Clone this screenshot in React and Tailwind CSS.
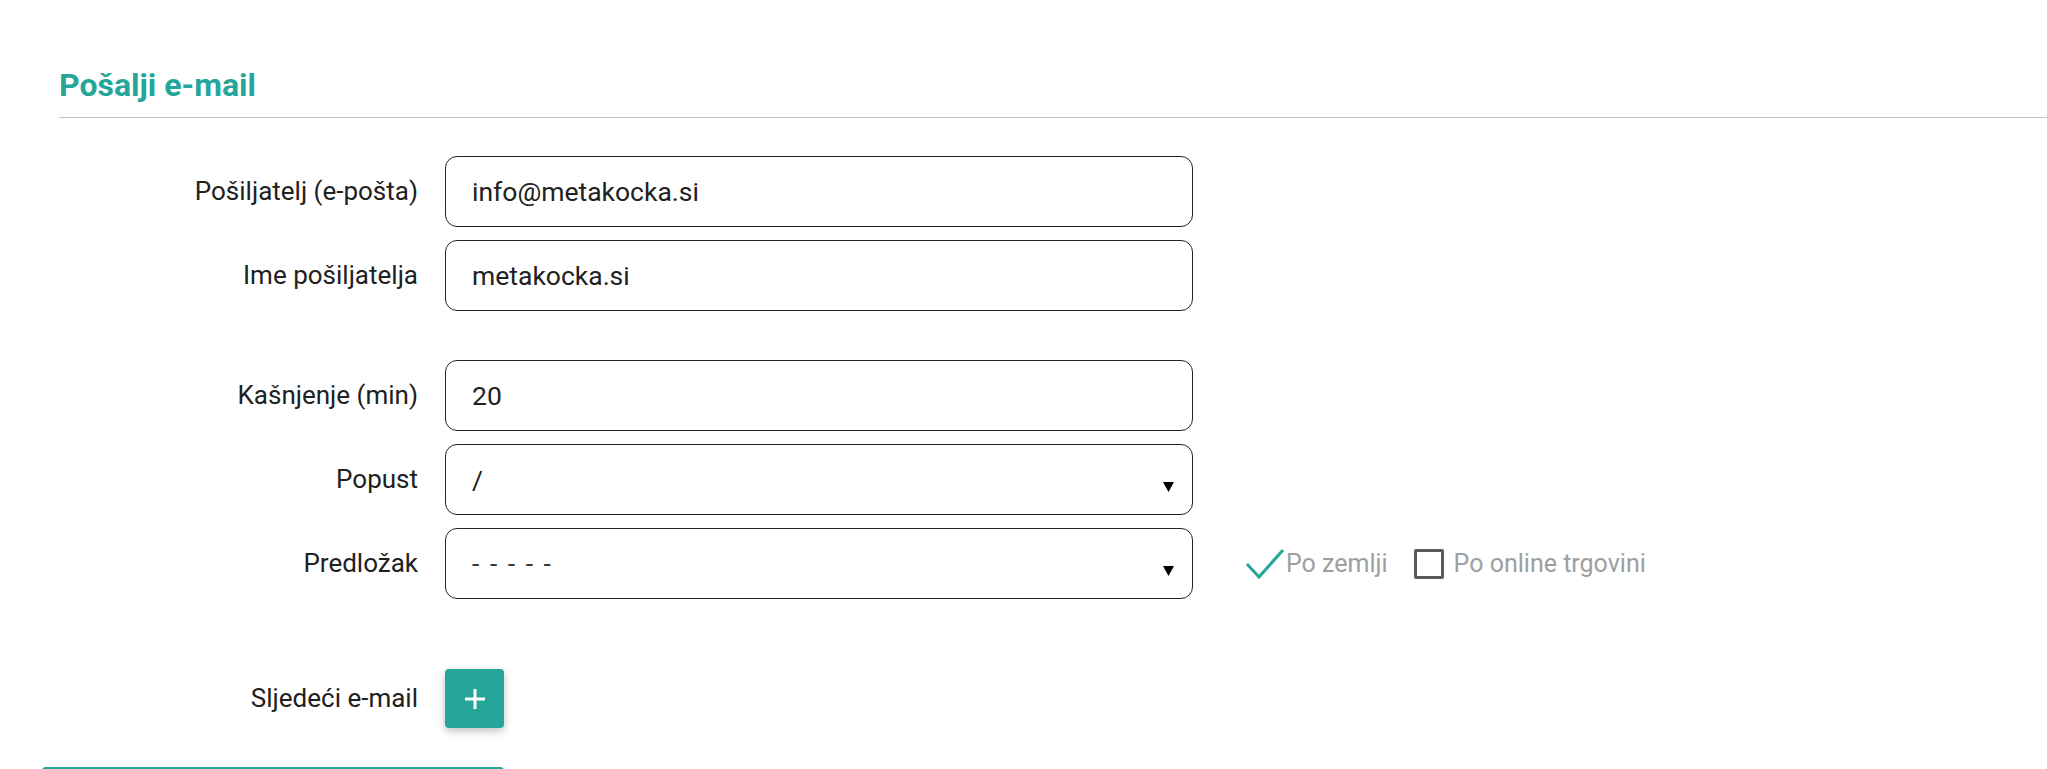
import { useState } from 'react'

const fieldBox =
  'w-[748px] h-[71px] border border-[#222] rounded-[12px] bg-white px-[26px] text-[26.5px] text-[#212121] outline-none'

function Row({ label, children, className = '' }) {
  return (
    <div className={`flex items-center ${className}`}>
      <label className="w-[386px] text-right text-[26px] text-[#212121] pr-[27px]">{label}</label>
      {children}
    </div>
  )
}

function SelectBox({ value, muted }) {
  return (
    <div className={`${fieldBox} flex items-center justify-between`}>
      <span className={muted ? 'text-[#3a3a3a] tracking-[2px]' : ''}>{value}</span>
      <svg width="11" height="10" viewBox="0 0 11 10" className="mt-[14px] mr-[-8px]">
        <polygon points="0,0 11,0 5.5,10" fill="#000" />
      </svg>
    </div>
  )
}

export default function App() {
  const [sender, setSender] = useState('info@metakocka.si')
  const [senderName, setSenderName] = useState('metakocka.si')
  const [delay, setDelay] = useState('20')
  const [byCountry, setByCountry] = useState(true)
  const [byStore, setByStore] = useState(false)

  return (
    <div className="min-h-screen bg-white font-['Roboto','Liberation_Sans',sans-serif] pl-[42px] pt-[61px]">
      <div className="pl-[17px]">
        <h2 className="text-[32px] leading-[48px] font-bold text-[#26a69a] pb-[8px] border-b border-[#c4c4c4]">
          Pošalji e-mail
        </h2>

        <div className="mt-[38px] flex flex-col gap-[13px]">
          <Row label="Pošiljatelj (e-pošta)">
            <input className={fieldBox} value={sender} onChange={(e) => setSender(e.target.value)} />
          </Row>
          <Row label="Ime pošiljatelja">
            <input className={fieldBox} value={senderName} onChange={(e) => setSenderName(e.target.value)} />
          </Row>
          <Row label="Kašnjenje (min)" className="mt-[36px]">
            <input className={fieldBox} value={delay} onChange={(e) => setDelay(e.target.value)} />
          </Row>
          <Row label="Popust">
            <SelectBox value="/" />
          </Row>
          <Row label="Predložak">
            <SelectBox value="- - - - -" muted />
            <div className="ml-[52px] flex items-center text-[25px] text-[#9e9e9e]">
              <button type="button" onClick={() => setByCountry(!byCountry)} className="flex items-center">
                <svg width="40" height="32" viewBox="0 0 40 32" className="mr-[1px]">
                  {byCountry ? (
                    <polyline points="2,16 14,29 38,2" fill="none" stroke="#26a69a" strokeWidth="3" />
                  ) : (
                    <rect x="5" y="1" width="28" height="28" rx="2" fill="none" stroke="#5a5a5a" strokeWidth="3" />
                  )}
                </svg>
                <span>Po zemlji</span>
              </button>
              <button type="button" onClick={() => setByStore(!byStore)} className="flex items-center ml-[26px]">
                <span className="w-[30px] h-[30px] border-[3px] border-[#5a5a5a] rounded-[2px] mr-[10px]" />
                <span>Po online trgovini</span>
              </button>
            </div>
          </Row>

          <Row label="Sljedeći e-mail" className="mt-[57px]">
            <button
              type="button"
              className="w-[59px] h-[59px] rounded-[4px] bg-[#26a69a] shadow-[0_3px_8px_rgba(0,0,0,0.25)] flex items-center justify-center"
            >
              <svg width="22" height="22" viewBox="0 0 22 22">
                <path d="M11 1v20M1 11h20" stroke="#fff" strokeWidth="3" />
              </svg>
            </button>
          </Row>
        </div>
      </div>

      <div className="mt-[39px] w-[462px] h-[44px] rounded-[4px] bg-[#26a69a]" />
    </div>
  )
}
